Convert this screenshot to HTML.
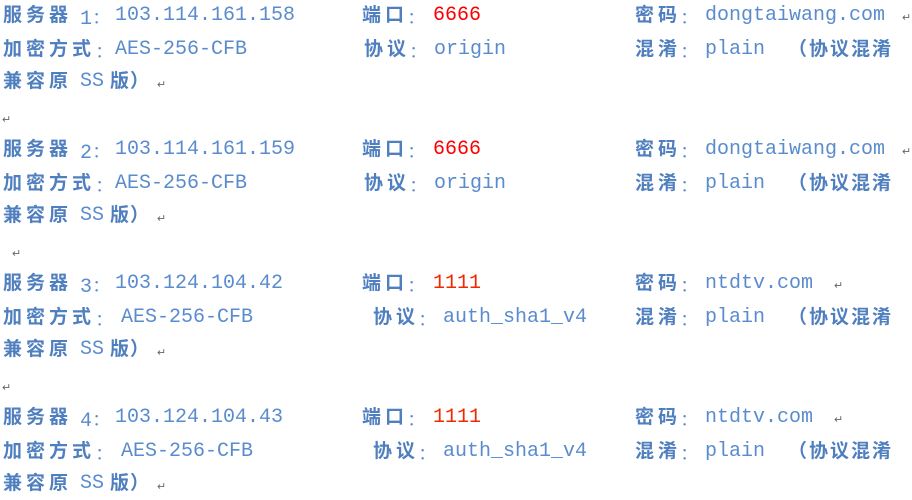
<!DOCTYPE html>
<html><head><meta charset="utf-8"><style>
body{margin:0;width:912px;height:499px;background:#fff;overflow:hidden;position:relative;font-family:"Liberation Mono","Noto Serif CJK SC",monospace;color:#5a8ccd}
.t{position:absolute;white-space:nowrap;font-size:20px;line-height:26px;margin-top:3px}
.c{font-family:"Noto Sans CJK SC",sans-serif;font-weight:bold;font-size:19px;color:#4f7fbf;letter-spacing:4px;margin-top:1px}
.k{font-family:"Noto Serif CJK SC",serif}
.r{color:#f00}
.o{color:#f02a00}
.m{font-size:11px;color:#666;font-family:"Liberation Sans",sans-serif}
</style></head><body>
<!-- Block 1 -->
<div class="t c" style="left:3px;top:0px">服务器</div><div class="t" style="left:80px;top:0px">1<span class="k">：</span></div><div class="t" style="left:115px;top:0px">103.114.161.158</div>
<div class="t c" style="left:362px;top:0px">端口</div><div class="t k" style="left:407px;top:0px">：</div><div class="t r" style="left:433px;top:0px">6666</div>
<div class="t c" style="left:635px;top:0px">密码</div><div class="t k" style="left:680px;top:0px">：</div><div class="t" style="left:705px;top:0px">dongtaiwang.com</div><div class="t m" style="left:902px;top:2px">↵</div>
<div class="t c" style="left:3px;top:34px">加密方式</div><div class="t k" style="left:95px;top:34px">：</div><div class="t" style="left:115px;top:34px">AES-256-CFB</div>
<div class="t c" style="left:364px;top:34px">协议</div><div class="t k" style="left:409px;top:34px">：</div><div class="t" style="left:434px;top:34px">origin</div>
<div class="t c" style="left:635px;top:34px">混淆</div><div class="t k" style="left:680px;top:34px">：</div><div class="t" style="left:705px;top:34px">plain</div><div class="t c" style="left:788px;top:34px;letter-spacing:2px">（协议混淆</div>
<div class="t c" style="left:3px;top:66px">兼容原</div><div class="t" style="left:80px;top:66px">SS</div><div class="t c" style="left:110px;top:66px;letter-spacing:1px">版）</div><div class="t m" style="left:157px;top:69px">↵</div>
<div class="t m" style="left:2px;top:104px">↵</div>
<!-- Block 2 -->
<div class="t c" style="left:3px;top:134px">服务器</div><div class="t" style="left:80px;top:134px">2<span class="k">：</span></div><div class="t" style="left:115px;top:134px">103.114.161.159</div>
<div class="t c" style="left:362px;top:134px">端口</div><div class="t k" style="left:407px;top:134px">：</div><div class="t r" style="left:433px;top:134px">6666</div>
<div class="t c" style="left:635px;top:134px">密码</div><div class="t k" style="left:680px;top:134px">：</div><div class="t" style="left:705px;top:134px">dongtaiwang.com</div><div class="t m" style="left:902px;top:136px">↵</div>
<div class="t c" style="left:3px;top:168px">加密方式</div><div class="t k" style="left:95px;top:168px">：</div><div class="t" style="left:115px;top:168px">AES-256-CFB</div>
<div class="t c" style="left:364px;top:168px">协议</div><div class="t k" style="left:409px;top:168px">：</div><div class="t" style="left:434px;top:168px">origin</div>
<div class="t c" style="left:635px;top:168px">混淆</div><div class="t k" style="left:680px;top:168px">：</div><div class="t" style="left:705px;top:168px">plain</div><div class="t c" style="left:788px;top:168px;letter-spacing:2px">（协议混淆</div>
<div class="t c" style="left:3px;top:200px">兼容原</div><div class="t" style="left:80px;top:200px">SS</div><div class="t c" style="left:110px;top:200px;letter-spacing:1px">版）</div><div class="t m" style="left:157px;top:203px">↵</div>
<div class="t m" style="left:12px;top:238px">↵</div>
<!-- Block 3 -->
<div class="t c" style="left:3px;top:268px">服务器</div><div class="t" style="left:80px;top:268px">3<span class="k">：</span></div><div class="t" style="left:115px;top:268px">103.124.104.42</div>
<div class="t c" style="left:362px;top:268px">端口</div><div class="t k" style="left:407px;top:268px">：</div><div class="t o" style="left:433px;top:268px">1111</div>
<div class="t c" style="left:635px;top:268px">密码</div><div class="t k" style="left:680px;top:268px">：</div><div class="t" style="left:705px;top:268px">ntdtv.com</div><div class="t m" style="left:834px;top:270px">↵</div>
<div class="t c" style="left:3px;top:302px">加密方式</div><div class="t k" style="left:95px;top:302px">：</div><div class="t" style="left:121px;top:302px">AES-256-CFB</div>
<div class="t c" style="left:373px;top:302px">协议</div><div class="t k" style="left:418px;top:302px">：</div><div class="t" style="left:443px;top:302px">auth_sha1_v4</div>
<div class="t c" style="left:635px;top:302px">混淆</div><div class="t k" style="left:680px;top:302px">：</div><div class="t" style="left:705px;top:302px">plain</div><div class="t c" style="left:788px;top:302px;letter-spacing:2px">（协议混淆</div>
<div class="t c" style="left:3px;top:334px">兼容原</div><div class="t" style="left:80px;top:334px">SS</div><div class="t c" style="left:110px;top:334px;letter-spacing:1px">版）</div><div class="t m" style="left:157px;top:337px">↵</div>
<div class="t m" style="left:2px;top:372px">↵</div>
<!-- Block 4 -->
<div class="t c" style="left:3px;top:402px">服务器</div><div class="t" style="left:80px;top:402px">4<span class="k">：</span></div><div class="t" style="left:115px;top:402px">103.124.104.43</div>
<div class="t c" style="left:362px;top:402px">端口</div><div class="t k" style="left:407px;top:402px">：</div><div class="t o" style="left:433px;top:402px">1111</div>
<div class="t c" style="left:635px;top:402px">密码</div><div class="t k" style="left:680px;top:402px">：</div><div class="t" style="left:705px;top:402px">ntdtv.com</div><div class="t m" style="left:834px;top:404px">↵</div>
<div class="t c" style="left:3px;top:436px">加密方式</div><div class="t k" style="left:95px;top:436px">：</div><div class="t" style="left:121px;top:436px">AES-256-CFB</div>
<div class="t c" style="left:373px;top:436px">协议</div><div class="t k" style="left:418px;top:436px">：</div><div class="t" style="left:443px;top:436px">auth_sha1_v4</div>
<div class="t c" style="left:635px;top:436px">混淆</div><div class="t k" style="left:680px;top:436px">：</div><div class="t" style="left:705px;top:436px">plain</div><div class="t c" style="left:788px;top:436px;letter-spacing:2px">（协议混淆</div>
<div class="t c" style="left:3px;top:468px">兼容原</div><div class="t" style="left:80px;top:468px">SS</div><div class="t c" style="left:110px;top:468px;letter-spacing:1px">版）</div><div class="t m" style="left:157px;top:471px">↵</div>
</body></html>
